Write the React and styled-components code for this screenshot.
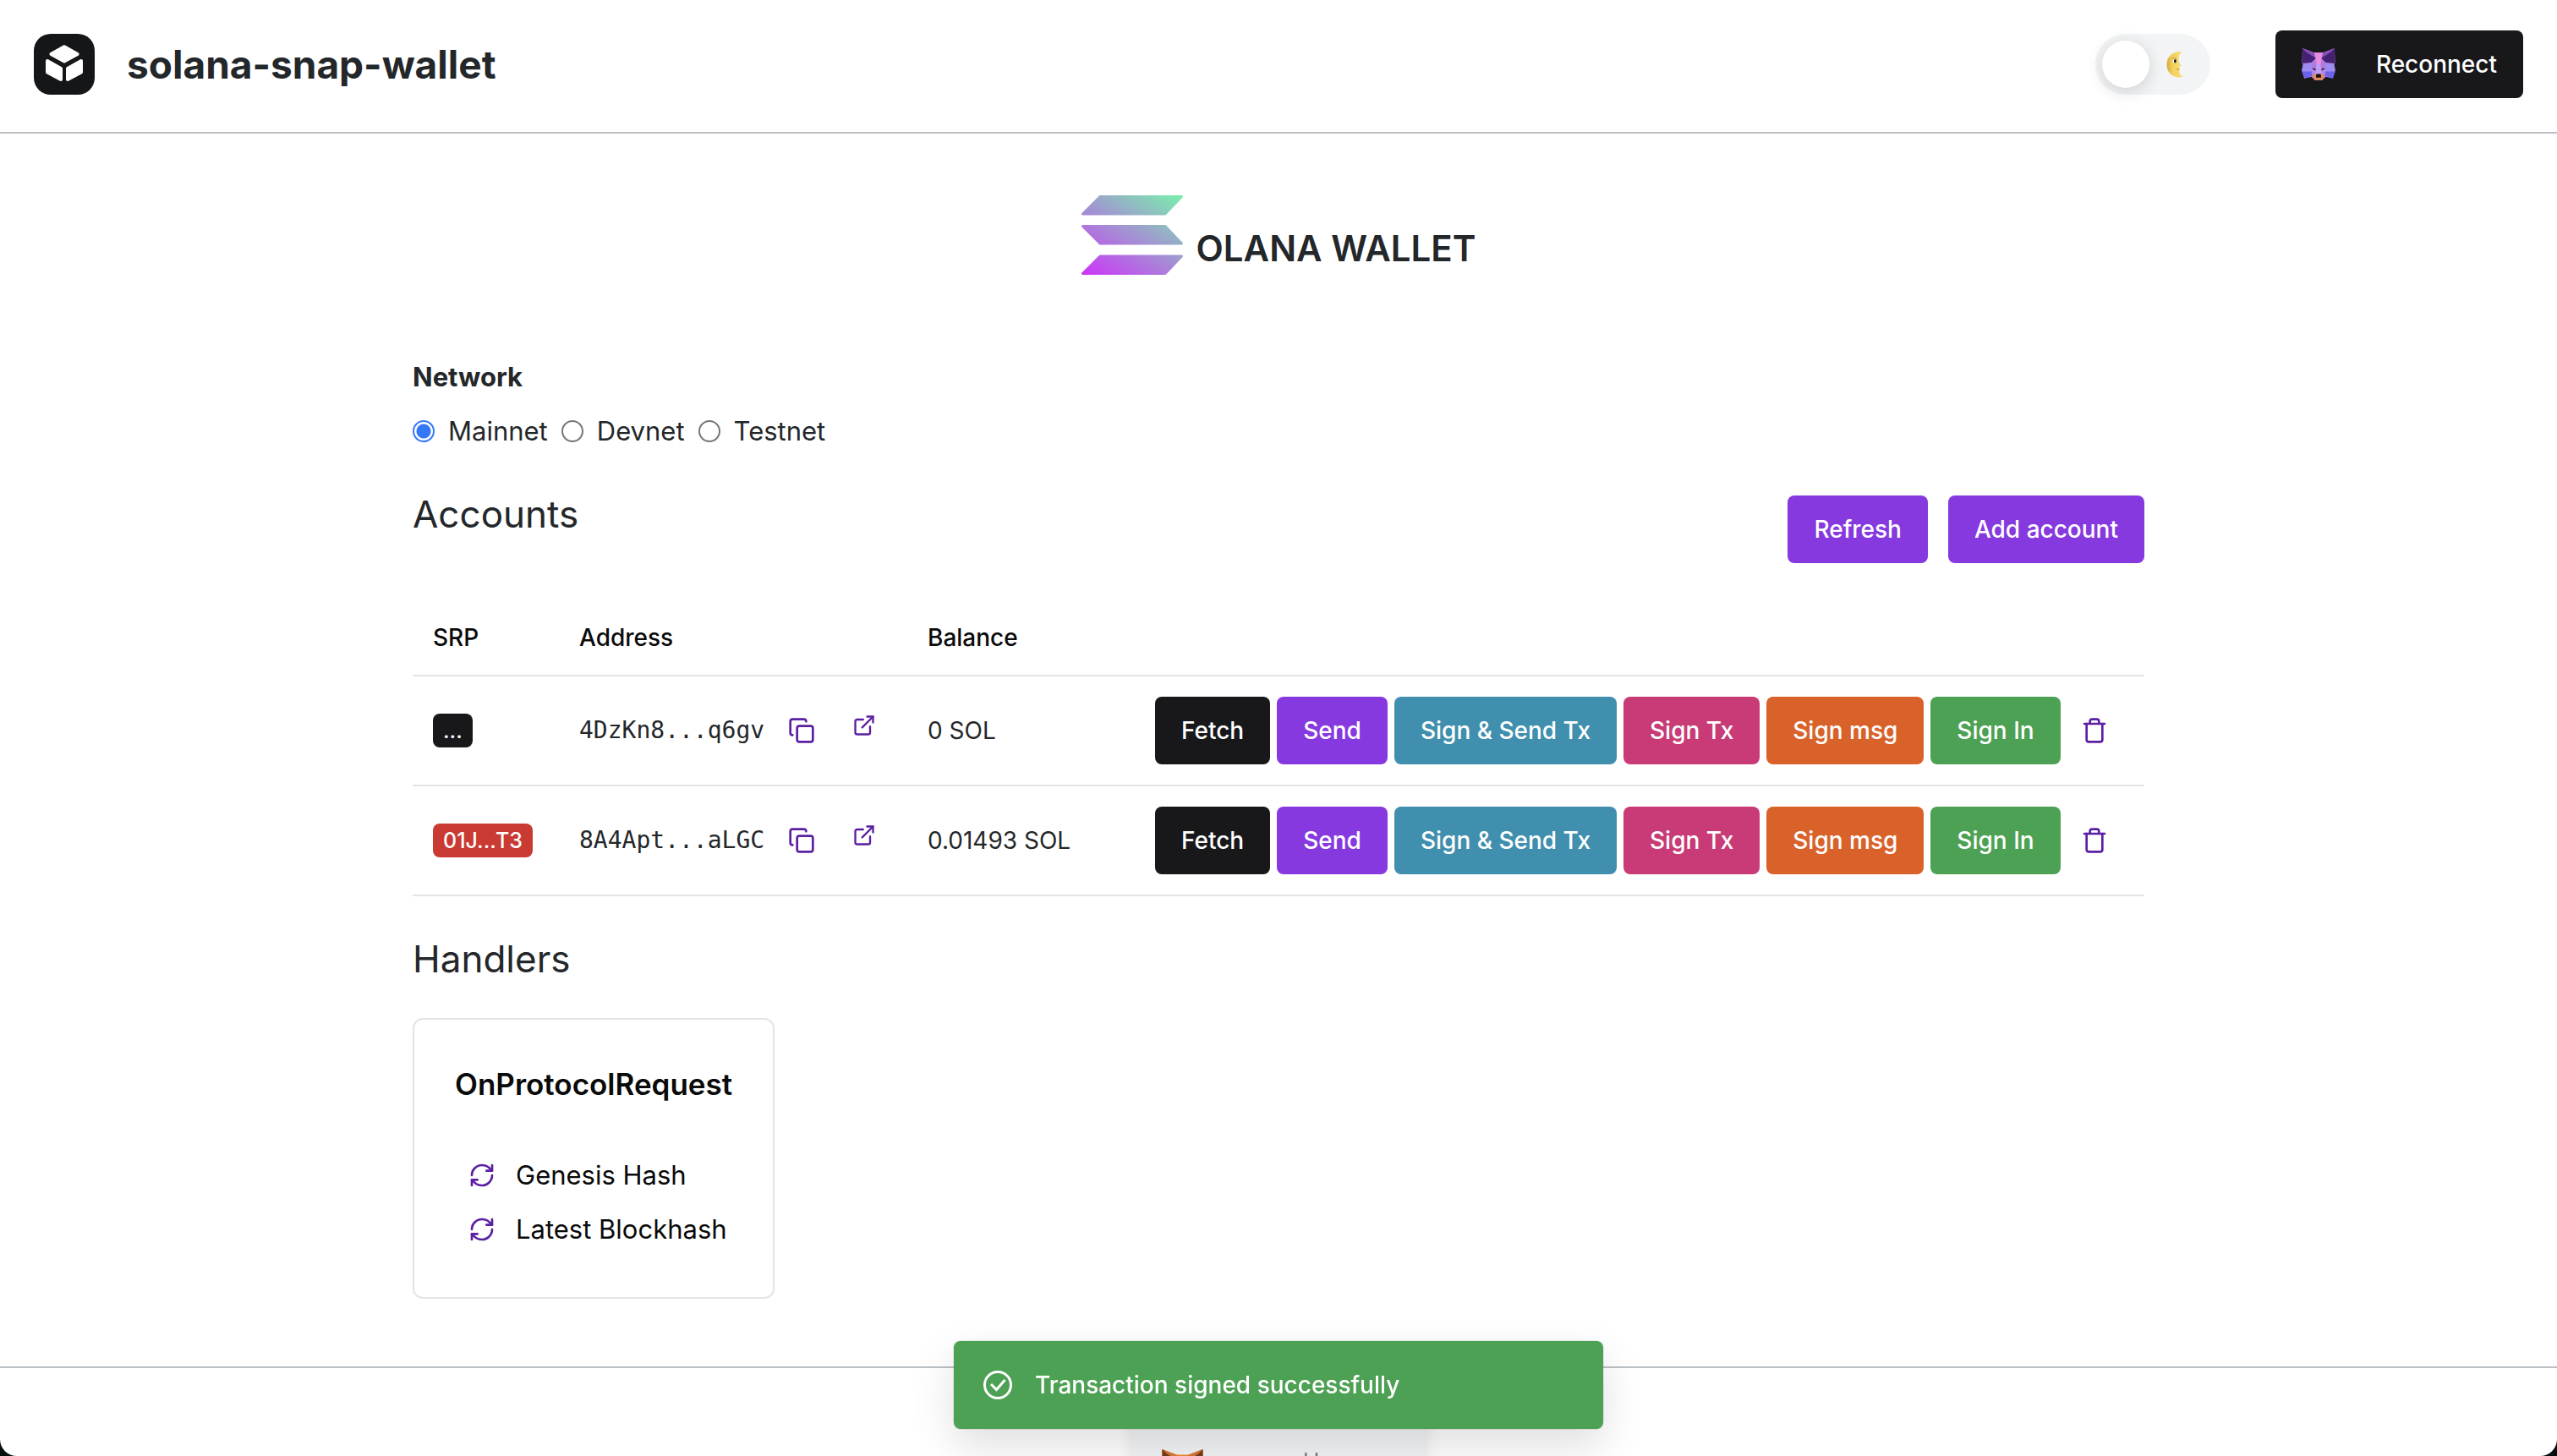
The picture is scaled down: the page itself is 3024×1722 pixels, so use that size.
import React, { useState } from 'react';
import styled, { createGlobalStyle } from 'styled-components';
import { Copy, ExternalLink, Trash, RefreshCw } from 'lucide-react';

const sans = "Inter, 'Liberation Sans', sans-serif";
const mono = "'DejaVu Sans Mono', 'Liberation Mono', monospace";

const color = {
  text: '#24272a',
  ink: '#18181b',
  black: '#0a0a0a',
  rule: '#bbc0c5',
  line: '#e4e4e4',
  icon: '#5b1fa3',
  purple: '#8639df',
  blue: '#408fae',
  pink: '#c93b76',
  orange: '#d9622b',
  green: '#4da154',
  red: '#c93a32',
};

const GlobalStyle = createGlobalStyle`
  *, *::before, *::after { box-sizing: border-box; }
  body {
    margin: 0;
    background: #06110f;
    color: ${color.text};
    font-family: ${sans};
    font-size: 31px;
    line-height: 48px;
  }
  h1, h2, h3, p, ul, fieldset { margin: 0; padding: 0; }
  button { font-family: inherit; cursor: pointer; }
`;

const Page = styled.div`
  display: flex;
  flex-direction: column;
  height: 100vh;
  overflow: hidden;
  background: #fff;
  border-radius: 0 0 20px 20px;
`;

const Header = styled.header`
  display: flex;
  align-items: center;
  justify-content: space-between;
  padding: 36px 40px 40px;
  border-bottom: 2px solid ${color.rule};
`;

const Brand = styled.div`
  display: flex;
  align-items: center;
  gap: 38px;
`;

const BrandName = styled.p`
  font-size: 46px;
  line-height: 56px;
  font-weight: 700;
`;

const HeaderActions = styled.div`
  display: flex;
  align-items: center;
  gap: 77px;
`;

const Toggle = styled.button`
  display: flex;
  align-items: center;
  gap: 20px;
  width: 136px;
  height: 72px;
  padding: 8px;
  border: 0;
  border-radius: 36px;
  background: #f2f4f6;
`;

const Knob = styled.span`
  width: 56px;
  height: 56px;
  border-radius: 50%;
  background: #fff;
  box-shadow: 0 4px 20px rgba(0, 0, 0, 0.15);
`;

const Button = styled.button`
  display: inline-flex;
  align-items: center;
  justify-content: center;
  gap: ${(p) => p.$gap || 16}px;
  height: 80px;
  padding: 0 31px;
  border: 0;
  border-radius: 8px;
  background: ${(p) => color[p.$tone]};
  color: #fff;
  font-size: 28px;
  line-height: 40px;
  font-weight: 500;
  white-space: nowrap;
`;

const IconButton = styled.button`
  display: inline-flex;
  align-items: center;
  justify-content: center;
  flex: none;
  width: 64px;
  height: 64px;
  padding: 0;
  border: 0;
  background: none;
  color: ${color.icon};
`;

const Main = styled.main`
  flex: none;
  width: 100%;
  max-width: 2048px;
  margin: 0 auto;
  padding: 72px 0 80px;
`;

const Hero = styled.div`
  display: flex;
  align-items: flex-end;
  justify-content: center;
  gap: 16px;
  margin-bottom: 96px;
`;

const HeroTitle = styled.h1`
  font-size: 42px;
  line-height: 64px;
  font-weight: 600;
`;

const Network = styled.fieldset`
  min-width: 0;
  margin-bottom: 52px;
  border: 0;
`;

const NetworkLegend = styled.legend`
  padding: 0;
  margin-bottom: 16px;
  font-weight: 700;
`;

const RadioGroup = styled.div`
  display: flex;
  gap: 16px;
`;

const RadioLabel = styled.label`
  display: flex;
  align-items: center;
  gap: 16px;
`;

const Radio = styled.input`
  appearance: none;
  width: 26px;
  height: 26px;
  margin: 0;
  border: 2px solid #767676;
  border-radius: 50%;
  background: #fff;
  &:checked {
    border-color: #3478f6;
    background: radial-gradient(circle, #3478f6 0 8px, #fff 9px);
  }
`;

const SectionHead = styled.div`
  display: flex;
  justify-content: space-between;
  align-items: flex-start;
  margin-bottom: 44px;
`;

const SectionTitle = styled.h2`
  font-size: 44px;
  line-height: 44px;
  font-weight: 400;
`;

const ButtonGroup = styled.div`
  display: flex;
  align-items: center;
  gap: ${(p) => p.$gap}px;
`;

const Table = styled.table`
  width: 100%;
  table-layout: fixed;
  border-collapse: separate;
  border-spacing: 0;
  font-size: 28px;
  line-height: 40px;
`;

const Col = styled.col`
  width: ${(p) => (p.$width ? `${p.$width}px` : 'auto')};
`;

const Th = styled.th`
  padding: 24px;
  height: 90px;
  border-bottom: 2px solid ${color.line};
  color: ${color.black};
  font-weight: 500;
  text-align: left;
`;

const Td = styled.td`
  height: 130px;
  padding: 24px;
  border-bottom: 2px solid ${color.line};
  vertical-align: middle;
  white-space: nowrap;
`;

const Badge = styled.span`
  display: block;
  width: fit-content;
  padding: 0 12px;
  border-radius: 8px;
  background: ${(p) => color[p.$tone]};
  color: #fff;
  font-size: 25px;
  line-height: 40px;
  font-weight: 500;
`;

const AddressCell = styled.div`
  display: flex;
  align-items: center;
`;

const Address = styled.span`
  margin-right: 12px;
  font-family: ${mono};
  font-size: 28px;
`;

const ExplorerLink = styled.a`
  display: flex;
  margin-left: 28px;
  padding-bottom: 12px;
  color: ${color.icon};
`;

const Handlers = styled.section`
  padding-top: 52px;
`;

const Card = styled.article`
  width: fit-content;
  margin-top: 48px;
  padding: 48px;
  border: 2px solid ${color.line};
  border-radius: 12px;
  color: ${color.black};
`;

const CardTitle = styled.h3`
  margin-bottom: 48px;
  font-size: 35px;
  line-height: 56px;
  font-weight: 600;
`;

const HandlerList = styled.ul`
  list-style: none;
`;

const HandlerItem = styled.li`
  display: flex;
  align-items: center;
  gap: 8px;
`;

const Footer = styled.footer`
  display: flex;
  flex: none;
  justify-content: center;
  padding: 48px 0;
  border-top: 2px solid ${color.rule};
`;

const PoweredBy = styled.a`
  display: flex;
  align-items: flex-start;
  gap: 24px;
  width: 346px;
  padding: 48px 34px 32px;
  border-radius: 8px;
  background: #f2f4f6;
  box-shadow: 0 0 20px rgba(0, 0, 0, 0.1);
  color: #6a737d;
  font-size: 24px;
  line-height: 28px;
  text-decoration: none;
`;

const Toast = styled.div`
  position: fixed;
  bottom: 32px;
  left: 50%;
  display: flex;
  align-items: center;
  gap: 24px;
  width: 768px;
  margin-left: -384px;
  padding: 32px;
  border-radius: 8px;
  background: ${color.green};
  box-shadow: 0 20px 50px rgba(0, 0, 0, 0.13), 0 0 2px rgba(0, 0, 0, 0.25);
  color: #fff;
  font-size: 28px;
  line-height: 40px;
  font-weight: 500;
`;

function SnapLogo() {
  return (
    <svg width="72" height="72" viewBox="0 0 72 72" aria-hidden="true">
      <rect width="72" height="72" rx="20" fill="#141618" />
      <g fill="#fff" stroke="#fff" strokeWidth="4" strokeLinejoin="round">
        <path d="M36 15.2 51.6 24 36 32.4 20.4 24Z" />
        <path d="M16 32 32 41V54L16 45.5Z" />
        <path d="M56 32 40 41V54L56 45.5Z" />
      </g>
    </svg>
  );
}

function Moon() {
  return (
    <svg width="21" height="31" viewBox="0 0 21 31" aria-hidden="true">
      <defs>
        <linearGradient id="moon" x1="0" y1="0" x2="1" y2="0">
          <stop offset="0" stopColor="#d9a93c" />
          <stop offset="0.35" stopColor="#f2d15c" />
          <stop offset="1" stopColor="#f7e07c" />
        </linearGradient>
      </defs>
      <path
        d="M18.5 .6C15 3 14.500 6 14.800 9 14.900 11 15 12.500 17.500 16.600 17.300 17.600 16.200 17.200 15.600 17.800 15.900 19 15 19.600 15.600 20.800 14.600 24 16 28 19.600 29.800 9 32.500 .5 26 .5 15.500 .5 6 8 -1.500 18.500 .6Z"
        fill="url(#moon)"
      />
      <path d="M12 20.500C13.500 21.500 15 21 15.700 20.600" stroke="#b98a2c" fill="none" />
      <path d="M6.500 9C8 7 10.500 7 12 8.500" stroke="#b98a2c" fill="none" />
      <ellipse cx="10" cy="11.300" rx="2.400" ry="2.200" fill="#fff" />
      <ellipse cx="10.400" cy="11.300" rx="1.500" ry="2.200" fill="#2b2118" />
    </svg>
  );
}

const foxPalettes = {
  flask: {
    earTip: '#8a4fb5', ear: '#452173', brow: '#b583e6', forehead: '#e88ee0',
    temple: '#b678dc', cheek: '#9c8cf2', jaw: '#6a62ea', snout: '#b9a0f4', chin: '#e08a55',
  },
  classic: {
    earTip: '#d5793b', ear: '#763e1a', brow: '#e4761b', forehead: '#f6851b',
    temple: '#e4761b', cheek: '#f6851b', jaw: '#e2761b', snout: '#cd6116', chin: '#c0ad9e',
  },
};

function Fox({ palette, width, height }) {
  const c = foxPalettes[palette];
  return (
    <svg width={width} height={height} viewBox="0 0 38 36" aria-hidden="true">
      <path d="M1 0 14 5H24L37 0 37.500 16 36.500 19 37.800 24 35 34 27 32 23 36H15L11 32 3 34 .2 24 1.500 19 .5 16Z" fill={c.brow} />
      <path d="M1 0 14 5 16 11 5 4Z" fill={c.earTip} />
      <path d="M37 0 24 5 22 11 33 4Z" fill={c.earTip} />
      <path d="M1 0 5 4 16 11 11 16 1 17Z" fill={c.ear} />
      <path d="M37 0 33 4 22 11 27 16 37 17Z" fill={c.ear} />
      <path d="M14 5H24L22 12 20.500 28H17.500L16 12Z" fill={c.forehead} />
      <path d="M1.500 19 11 16 16 22 9 27 .2 26Z" fill={c.cheek} />
      <path d="M36.500 19 27 16 22 22 29 27 37.800 26Z" fill={c.cheek} />
      <path d="M11 16 16 12 17 26 12 23Z" fill={c.temple} />
      <path d="M27 16 22 12 21 26 26 23Z" fill={c.temple} />
      <path d="M.2 26H11L12 31 3 34Z" fill={c.jaw} />
      <path d="M37.800 26H27L26 31 35 34Z" fill={c.jaw} />
      <path d="M17 18H21L23 30H15Z" fill={c.snout} />
      <path d="M12 30 16 29H22L26 30 23 36H15Z" fill={c.chin} />
      <path d="M12 22 16 23.500 15.500 25 13 24Z" fill="#24143c" />
      <path d="M26 22 22 23.500 22.500 25 25 24Z" fill="#24143c" />
      <path d="M16.500 29H21.500L22 33H16Z" fill="#141014" />
    </svg>
  );
}

function SolanaMark() {
  const shade = { fill: 'url(#sol)', stroke: 'url(#sol)', strokeWidth: 3, strokeLinejoin: 'round' };
  return (
    <svg width="120" height="96" viewBox="0 0 120 96" aria-hidden="true">
      <defs>
        <linearGradient id="sol" gradientUnits="userSpaceOnUse" x1="102" y1="-14" x2="26" y2="110">
          <stop offset="0" stopColor="#77f5ab" />
          <stop offset="1" stopColor="#cc35f8" />
        </linearGradient>
      </defs>
      <path d="M22 2.500H118.500L99 23H1.500Z" {...shade} />
      <path d="M1.500 37.500H99L118.500 58H22Z" {...shade} />
      <path d="M22 73H118.500L99 93.500H1.500Z" {...shade} />
    </svg>
  );
}

function SuccessIcon() {
  return (
    <svg width="40" height="40" viewBox="0 0 40 40" fill="none" stroke="#fff" strokeWidth="3" aria-hidden="true">
      <circle cx="20" cy="20" r="15.500" />
      <path d="M12 19 18.500 25.500 28.500 14" />
    </svg>
  );
}

const networks = ['Mainnet', 'Devnet', 'Testnet'];

const accounts = [
  { srp: '...', tone: 'ink', address: '4DzKn8...q6gv', balance: '0 SOL' },
  { srp: '01J...T3', tone: 'red', address: '8A4Apt...aLGC', balance: '0.01493 SOL' },
];

const actions = [
  ['Fetch', 'ink'],
  ['Send', 'purple'],
  ['Sign & Send Tx', 'blue'],
  ['Sign Tx', 'pink'],
  ['Sign msg', 'orange'],
  ['Sign In', 'green'],
];

const handlers = ['Genesis Hash', 'Latest Blockhash'];

function AccountRow({ account }) {
  return (
    <tr>
      <Td><Badge $tone={account.tone}>{account.srp}</Badge></Td>
      <Td>
        <AddressCell>
          <Address>{account.address}</Address>
          <IconButton type="button" aria-label="Copy address"><Copy size={32} /></IconButton>
          <ExplorerLink href="#explorer" aria-label="Open in explorer"><ExternalLink size={28} /></ExplorerLink>
        </AddressCell>
      </Td>
      <Td>{account.balance}</Td>
      <Td>
        <ButtonGroup $gap={8}>
          {actions.map(([label, tone]) => (
            <Button key={label} type="button" $tone={tone}>{label}</Button>
          ))}
          <IconButton type="button" aria-label="Remove account"><Trash size={32} /></IconButton>
        </ButtonGroup>
      </Td>
    </tr>
  );
}

export default function App() {
  const [network, setNetwork] = useState('Mainnet');
  return (
    <>
      <GlobalStyle />
      <Page>
        <Header>
          <Brand>
            <SnapLogo />
            <BrandName>solana-snap-wallet</BrandName>
          </Brand>
          <HeaderActions>
            <Toggle type="button" aria-label="Toggle dark mode">
              <Knob />
              <Moon />
            </Toggle>
            <Button type="button" $tone="ink" $gap={48}>
              <Fox palette="flask" width={40} height={38} />
              Reconnect
            </Button>
          </HeaderActions>
        </Header>

        <Main>
          <Hero>
            <SolanaMark />
            <HeroTitle>OLANA WALLET</HeroTitle>
          </Hero>

          <Network>
            <NetworkLegend>Network</NetworkLegend>
            <RadioGroup>
              {networks.map((name) => (
                <RadioLabel key={name}>
                  <Radio
                    type="radio"
                    name="network"
                    checked={network === name}
                    onChange={() => setNetwork(name)}
                  />
                  {name}
                </RadioLabel>
              ))}
            </RadioGroup>
          </Network>

          <section>
            <SectionHead>
              <SectionTitle>Accounts</SectionTitle>
              <ButtonGroup $gap={24}>
                <Button type="button" $tone="purple">Refresh</Button>
                <Button type="button" $tone="purple">Add account</Button>
              </ButtonGroup>
            </SectionHead>
            <Table>
              <colgroup>
                <Col $width={173} />
                <Col $width={412} />
                <Col $width={269} />
                <Col />
              </colgroup>
              <thead>
                <tr>
                  <Th>SRP</Th>
                  <Th>Address</Th>
                  <Th>Balance</Th>
                  <Th aria-label="Actions" />
                </tr>
              </thead>
              <tbody>
                {accounts.map((account) => (
                  <AccountRow key={account.address} account={account} />
                ))}
              </tbody>
            </Table>
          </section>

          <Handlers>
            <SectionTitle>Handlers</SectionTitle>
            <Card>
              <CardTitle>OnProtocolRequest</CardTitle>
              <HandlerList>
                {handlers.map((name) => (
                  <HandlerItem key={name}>
                    <IconButton type="button" aria-label={`Run ${name}`}><RefreshCw size={32} /></IconButton>
                    {name}
                  </HandlerItem>
                ))}
              </HandlerList>
            </Card>
          </Handlers>
        </Main>

        <Footer>
          <PoweredBy href="#metamask">
            <Fox palette="classic" width={51} height={48} />
            powered by
          </PoweredBy>
        </Footer>
      </Page>

      <Toast role="status">
        <SuccessIcon />
        Transaction signed successfully
      </Toast>
    </>
  );
}
